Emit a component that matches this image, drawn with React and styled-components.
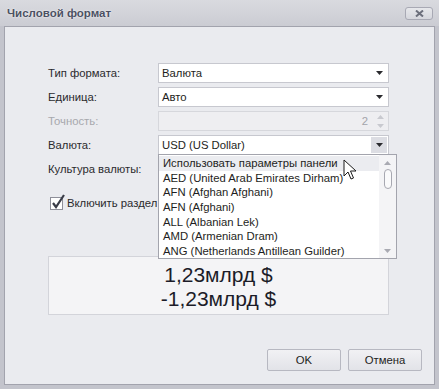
import React from "react";
import styled, { createGlobalStyle } from "styled-components";

const Global = createGlobalStyle`
  html, body { margin: 0; padding: 0; }
  body {
    width: 439px;
    height: 389px;
    overflow: hidden;
    font-family: "Liberation Sans", "DejaVu Sans", sans-serif;
    font-size: 11.3px;
    color: #2a2a2e;
  }
`;

const Window = styled.div`
  width: 439px;
  height: 389px;
  box-sizing: border-box;
  display: flex;
  flex-direction: column;
  background: #c3c4cc;
  padding: 0 4px 4px 4px;
`;

const TitleBar = styled.div`
  height: 26px;
  display: flex;
  align-items: center;
  justify-content: space-between;
  margin: 0 -4px;
  padding-left: 7px;
  padding-right: 6px;
  background: linear-gradient(#d9dadf, #cbccd3);
`;

const Title = styled.div`
  font-weight: bold;
  font-size: 11.5px;
  color: #4c5163;
  text-shadow: 0 0 2px #ffffff;
`;

const CloseButton = styled.div`
  width: 28px;
  height: 13px;
  box-sizing: border-box;
  border: 1px solid #a8a9b4;
  border-radius: 3px;
  background: linear-gradient(#e6e7eb, #d6d7dd);
  display: flex;
  align-items: center;
  justify-content: center;
  margin-top: 1px;
`;

const Client = styled.div`
  flex: 1;
  display: flex;
  flex-direction: column;
  background: #eaebef;
  border: 1px solid #a2a3ad;
  padding: 36px 12px 13px 43px;
  position: relative;
`;

const Form = styled.div`
  display: grid;
  grid-template-columns: 110px 231px;
  grid-auto-rows: 20px;
  row-gap: 4px;
`;

const Label = styled.div`
  display: flex;
  align-items: center;
  color: ${(p) => (p.disabled ? "#a7a8ad" : "#2a2a2e")};
`;

const Field = styled.div`
  position: relative;
  display: flex;
  align-items: center;
  box-sizing: border-box;
  border: 1px solid ${(p) => (p.disabled ? "#d6d7dc" : "#c7c8cf")};
  background: ${(p) => (p.disabled ? "#eeeef1" : "#ffffff")};
`;

const Value = styled.div`
  flex: 1;
  padding-left: 3px;
  text-align: ${(p) => (p.right ? "right" : "left")};
  padding-right: ${(p) => (p.right ? "4px" : "0")};
  color: ${(p) => (p.disabled ? "#a3a4aa" : "#1e1e22")};
  white-space: nowrap;
`;

const DropButton = styled.div`
  width: 16px;
  align-self: stretch;
  display: flex;
  align-items: center;
  justify-content: center;
  margin: 1px;
  background: ${(p) => (p.pressed ? "#dcdde3" : "transparent")};
`;

const Spin = styled.div`
  width: 16px;
  align-self: stretch;
  display: flex;
  flex-direction: column;
  align-items: center;
  justify-content: center;
  gap: 5px;
`;

const DropList = styled.div`
  position: absolute;
  top: 100%;
  left: -1px;
  width: 239px;
  height: 105px;
  box-sizing: border-box;
  border: 1px solid #a3a4ad;
  background: #ffffff;
  display: flex;
  z-index: 5;
`;

const Items = styled.div`
  flex: 1;
  padding-top: 1px;
`;

const Item = styled.div`
  height: 14.7px;
  line-height: 14.7px;
  padding-left: 4px;
  white-space: nowrap;
  color: #1e1e22;
  background: ${(p) => (p.active ? "#ebecf0" : "transparent")};
`;

const ScrollBar = styled.div`
  width: 17px;
  background: #f4f4f6;
  display: flex;
  flex-direction: column;
  align-items: center;
  padding: 6px 0 5px;
  box-sizing: border-box;
`;

const Thumb = styled.div`
  width: 6px;
  height: 18px;
  margin-top: 4px;
  border: 1px solid #a7a8b1;
  border-radius: 4px;
  background: #fafafb;
`;

const Cursor = styled.svg`
  position: absolute;
  left: 184px;
  top: 4px;
  z-index: 6;
`;

const CheckRow = styled.div`
  margin-top: 14px;
  height: 20px;
  display: flex;
  align-items: center;
  gap: 4px;
  padding-left: 2px;
`;

const CheckBox = styled.div`
  width: 13px;
  height: 13px;
  box-sizing: border-box;
  border: 1px solid #8e8f99;
  background: #ffffff;
  position: relative;
`;

const CheckText = styled.span`
  width: 90px;
  overflow: hidden;
  white-space: nowrap;
`;

const Preview = styled.div`
  margin-top: 43px;
  width: 341px;
  height: 59px;
  box-sizing: border-box;
  border: 1px solid #d3d4da;
  background: #f4f4f6;
  display: flex;
  flex-direction: column;
  align-items: center;
  justify-content: center;
  padding-top: 3px;
  font-size: 21px;
  line-height: 24px;
  color: #1c1c28;
`;

const Buttons = styled.div`
  margin-top: auto;
  display: flex;
  justify-content: flex-end;
  gap: 7px;
`;

const Button = styled.div`
  width: 74px;
  height: 22px;
  box-sizing: border-box;
  border: 1px solid #b7b8c1;
  border-radius: 2px;
  background: linear-gradient(#f1f1f4, #e2e3e8);
  display: flex;
  align-items: center;
  justify-content: center;
  color: #1e1e22;
`;

const Arrow = ({ color = "#2a2a2e", up }) => (
  <svg width="7" height="4" viewBox="0 0 7 4">
    <path d={up ? "M0 4 L7 4 L3.5 0 Z" : "M0 0 L7 0 L3.5 4 Z"} fill={color} />
  </svg>
);

const currencies = [
  "Использовать параметры панели",
  "AED (United Arab Emirates Dirham)",
  "AFN (Afghan Afghani)",
  "AFN (Afghani)",
  "ALL (Albanian Lek)",
  "AMD (Armenian Dram)",
  "ANG (Netherlands Antillean Guilder)",
];

export default function App() {
  return (
    <>
      <Global />
      <Window>
        <TitleBar>
          <Title>Числовой формат</Title>
          <CloseButton>
            <svg width="9" height="7" viewBox="0 0 9 7">
              <path d="M1 0.5 L8 6.5 M8 0.5 L1 6.5" stroke="#6c6f7c" strokeWidth="2" />
            </svg>
          </CloseButton>
        </TitleBar>
        <Client>
          <Form>
            <Label>Тип формата:</Label>
            <Field>
              <Value>Валюта</Value>
              <DropButton><Arrow /></DropButton>
            </Field>

            <Label>Единица:</Label>
            <Field>
              <Value>Авто</Value>
              <DropButton><Arrow /></DropButton>
            </Field>

            <Label disabled>Точность:</Label>
            <Field disabled>
              <Value right disabled>2</Value>
              <Spin>
                <Arrow up color="#c8c9cf" />
                <Arrow color="#c8c9cf" />
              </Spin>
            </Field>

            <Label>Валюта:</Label>
            <Field>
              <Value>USD (US Dollar)</Value>
              <DropButton pressed><Arrow /></DropButton>
              <DropList>
                <Items>
                  {currencies.map((c, i) => (
                    <Item key={i} active={i === 0}>{c}</Item>
                  ))}
                </Items>
                <ScrollBar>
                  <Arrow up color="#a9aab2" />
                  <Thumb />
                  <div style={{ flex: 1 }} />
                  <Arrow color="#a9aab2" />
                </ScrollBar>
                <Cursor width="15" height="23" viewBox="0 0 15 23">
                  <path
                    d="M1 1 L1 17 L5 13 L8 20 L10.5 19 L7.5 12 L13 12 Z"
                    fill="#ffffff"
                    stroke="#1a1a1a"
                    strokeWidth="1"
                    strokeLinejoin="round"
                  />
                </Cursor>
              </DropList>
            </Field>

            <Label>Культура валюты:</Label>
            <Field>
              <Value />
              <DropButton><Arrow /></DropButton>
            </Field>
          </Form>

          <CheckRow>
            <CheckBox>
              <svg width="15" height="16" viewBox="0 0 15 16" style={{ position: "absolute", left: 0, top: -4 }}>
                <path d="M2 9 L5 13 L13 1" fill="none" stroke="#3a3d48" strokeWidth="2.2" />
              </svg>
            </CheckBox>
            <CheckText>Включить разделитель групп</CheckText>
          </CheckRow>

          <Preview>
            <div>1,23млрд $</div>
            <div>-1,23млрд $</div>
          </Preview>

          <Buttons>
            <Button>OK</Button>
            <Button>Отмена</Button>
          </Buttons>
        </Client>
      </Window>
    </>
  );
}
